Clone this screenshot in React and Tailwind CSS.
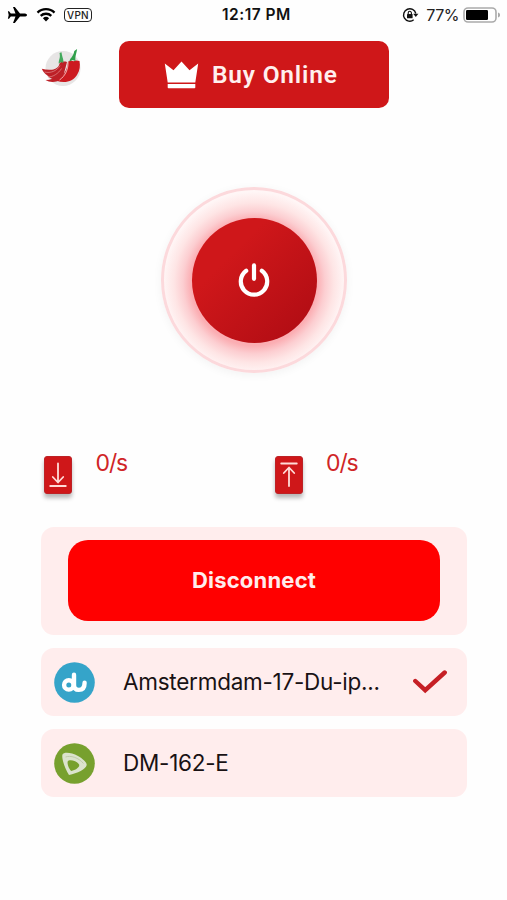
const servers = [
  { id: 1, name: 'Amstermdam-17-Du-ip...', logo: 'du', active: true },
  { id: 2, name: 'DM-162-E', logo: 'etisalat', active: false },
];

function StatusBar() {
  return (
    <div className="grid grid-cols-3 items-center h-[29px] pl-[7px] pr-[7px]">
      <div className="flex items-center">
        <svg className="w-5 h-[18px]" viewBox="0 0 20 18">
          <path
            d="M20 9c0-1-1.3-1.5-3-1.5h-4L7.800 1H6l2.500 6.500H3.800L2 5.200H.9L1.700 9 .9 12.800H2l1.800-2.300h4.700L6 17h1.800l5.200-6.500h4c1.700 0 3-.5 3-1.500z"
            fill="#000"
          />
        </svg>
        <svg className="ml-[9px] w-5 h-[15px]" viewBox="0 0 20 15">
          <path d="M1.500 5.600a12.200 12.200 0 0 1 17 0" fill="none" stroke="#000" strokeWidth="2.300" />
          <path d="M4.700 8.900a7.600 7.600 0 0 1 10.600 0" fill="none" stroke="#000" strokeWidth="2.300" />
          <path d="M10 14.400l-3.100-3.200a4.500 4.500 0 0 1 6.200 0z" fill="#000" />
        </svg>
        <span className="ml-[8px] flex items-center justify-center w-[28px] h-[14px] rounded-[4px] border-[1.5px] border-[#222] text-[10px] leading-none font-medium tracking-[0.3px] text-[#222]">
          VPN
        </span>
      </div>
      <div className="text-center text-[15.5px] leading-none font-semibold tracking-[0.5px] text-[#111] whitespace-nowrap pl-[6px]">
        12:17 PM
      </div>
      <div className="flex items-center justify-end">
        <svg className="w-[17px] h-[16px]" viewBox="0 0 17 16" fill="none" stroke="#111">
          <path d="M13.800 6.500A6.200 6.200 0 1 0 11.700 12.800" strokeWidth="1.400" />
          <path d="M11.200 6.700h5.200l-2.600 3.200z" fill="#111" stroke="none" />
          <rect x="5" y="7" width="5.600" height="4.300" rx=".6" fill="#111" stroke="none" />
          <path d="M6.200 7V5.900a1.600 1.600 0 0 1 3.200 0V7" strokeWidth="1.100" />
        </svg>
        <span className="ml-[7px] text-[16px] leading-none tracking-[-0.5px] text-[#222]">77%</span>
        <svg className="ml-[4px] w-[37px] h-4" viewBox="0 0 37 16">
          <rect x="1" y="1" width="32" height="14" rx="4" fill="#fff" stroke="#aaa" strokeWidth="1.600" />
          <rect x="3" y="3" width="22" height="10" rx="1.200" fill="#000" />
          <path d="M35 5.500c1.700.6 2 1.500 2 2.500s-.3 1.900-2 2.500z" fill="#aaa" />
        </svg>
      </div>
    </div>
  );
}

function ChiliLogo() {
  return (
    <svg className="w-[42px] h-[40px]" viewBox="0 0 42 40">
      <circle cx="22" cy="20.500" r="17.500" fill="#e7e5e5" />
      <path d="M26 14c-3-1-6-.5-7.500 1.500-.6 3.500-3.500 5.800-7.500 6.200C7.500 22.100 4 21.700.8 20.800c1.400 3.200 3.200 5.300 5.700 6.700 3 3.800 9 6 15 3.800z" fill="#bd2027" />
      <path d="M4.500 32c4.500 2.800 11 2.600 16.500-1l-5-2.800c-3 2.500-7 3.700-11.500 3.800z" fill="#bd2027" />
      <path d="M3.500 24c6 1.500 12.500-1 15.500-6.500M7 29c5 0 10.500-3.500 13.500-8.500" fill="none" stroke="#e8a0a0" strokeWidth=".6" />
      <path d="M27 13.700c-.8 7-3 13.500-11.500 19 8.500 3.200 16.700.6 20.500-5.700 3-4.800 3.300-9.500 2.500-14-2.600-1-4.500-.7-5.800.3-1.500-.9-3.800-.9-5.700.4z" fill="#cc1a20" />
      <path d="M27 14c.3 7-2.300 13.500-8.500 18" fill="none" stroke="#f4c2c2" strokeWidth=".9" />
      <path d="M17.700 15.500c-.2-4 2-5 .8-10.500l2-.7c.8 6 2.300 6.500 1.800 10.700l-2-1z" fill="#42a95c" />
      <path d="M28.500 13.500c.3-3.500 3.500-4 4.800-10.500l2.800-2c-.8 5.500-2.300 7.500-1.500 12l-3-1z" fill="#31a04c" />
    </svg>
  );
}

function PowerButton() {
  return (
    <button className="flex items-center justify-center size-[186px] rounded-full border-[3px] border-[#fcd9dc] bg-[radial-gradient(circle_at_50%_51.5%,#f9a3aa_0px,#fbaeb3_63px,#fcced1_71px,#fee5e5_80px,#fff6f6_91px)] shadow-[0_2px_10px_rgba(0,0,0,0.05)]">
      <span className="flex items-center justify-center size-[125px] rounded-full bg-linear-to-br from-[#cf171a] from-30% to-[#ad0b13]">
        <svg className="w-[34px] h-[36px]" viewBox="0 0 34 36" fill="none" stroke="#fff" strokeWidth="4.200" strokeLinecap="round">
          <path d="M17 3.400v13.400" />
          <path d="M9.200 8.800a13.200 13.200 0 1 0 15.600 0" />
        </svg>
      </span>
    </button>
  );
}

function Speed({ upload, value }) {
  return (
    <div className="flex items-start w-[230.5px]">
      <span className="flex items-center justify-center mt-[5px] w-[28px] h-[38px] rounded-[3px] bg-[#cf1719] border border-[#bd2226] shadow-[0_4px_4px_rgba(0,0,0,0.28)]">
        <svg
          className="w-[18px] h-[26px] shrink-0"
          viewBox="0 0 18 26"
          fill="none"
          stroke="#ffdcd8"
          strokeWidth="1.800"
          strokeLinecap="round"
          strokeLinejoin="round"
        >
          {upload ? (
            <path d="M1.200 1.500h15.600M9 24V6M3.800 11L9 5.500l5.200 5.500" />
          ) : (
            <path d="M1.200 24h15.600M9 1.500v18.500M3.800 15L9 20.500l5.200-5.500" />
          )}
        </svg>
      </span>
      <span className="ml-[23.5px] text-[23px] leading-[25px] tracking-[-1.1px] text-[#d02527]">{value}</span>
    </div>
  );
}

function DuLogo() {
  return (
    <svg className="size-[41px]" viewBox="0 0 41 41">
      <circle cx="20.500" cy="20.500" r="20.300" fill="#35a4c9" />
      <g fill="none" stroke="#fff" strokeWidth="4.400" strokeLinecap="round" strokeLinejoin="round">
        <circle cx="14.800" cy="22.900" r="4.700" />
        <path d="M20 12.700v10.300c0 3.200 1.700 4.900 4.800 4.900 3.800 0 5.800-2.600 5.800-7.200" />
      </g>
    </svg>
  );
}

function EtisalatLogo() {
  return (
    <svg className="size-[41px]" viewBox="0 0 41 41">
      <circle cx="20.500" cy="20.500" r="20.300" fill="#77a02e" />
      <path
        d="M8.500 11.500c1-2.500 8.500-2.500 15.500 1.500 5.500 3.200 9 6.700 8.700 9-.5 4-9.500 8.500-17.700 10C11.500 27 7.200 15.500 8.500 11.500z"
        fill="#dbe3cd"
      />
      <path d="M11.500 14c5-1.800 13 .5 18 6.500" fill="none" stroke="#b7c5a0" strokeWidth=".8" />
      <path d="M13.800 18.300c1.500-2.500 9.500-.3 11.300 3.200 1 2.500-3.500 5.500-7.700 6.500-2.200-1.700-4.600-7.200-3.600-9.700z" fill="#77a02e" />
    </svg>
  );
}

function ServerRow({ server }) {
  return (
    <div className="flex items-center h-[68px] pl-[13px] pr-5 rounded-[13px] bg-[#ffeded]">
      {server.logo === 'du' ? <DuLogo /> : <EtisalatLogo />}
      <span className="ml-[28px] flex-1 text-[22.5px] leading-none tracking-[-0.25px] text-[#191214] whitespace-nowrap">
        {server.name}
      </span>
      {server.active && (
        <svg className="w-[34px] h-[24px]" viewBox="0 0 34 24">
          <path d="M2.300 11l9.900 9.200L31.700 2.500" fill="none" stroke="#c61f25" strokeWidth="4.400" strokeLinecap="round" />
        </svg>
      )}
    </div>
  );
}

export default function App() {
  return (
    <div className="w-[507px] h-[900px] overflow-hidden bg-[#fefefe] font-['Inter','Liberation_Sans',sans-serif]">
      <StatusBar />

      {/* Header */}
      <div className="flex items-start pl-[41px] pt-[12px]">
        <div className="mt-[7px]">
          <ChiliLogo />
        </div>
        <button className="ml-[36px] flex items-center w-[270px] h-[67px] pl-[45px] rounded-[10px] bg-[#cf1719] text-white">
          <svg className="w-[35px] h-[28px]" viewBox="0 0 35 28" fill="#fff">
            <path d="M.8 2.500l8.700 6.800L17.500.5l8 8.800 8.700-6.800-2.900 18.900H3.700z" />
            <path d="M3.700 22.900h27.600v3.600q0 .8-.8.8h-26q-.8 0-.8-.8z" />
          </svg>
          <span className="ml-[13px] pt-[2px] font-['Roboto'] text-[24.5px] leading-none font-semibold tracking-[0.8px] text-[#fff0ee] whitespace-nowrap">
            Buy Online
          </span>
        </button>
      </div>

      {/* Power */}
      <div className="flex justify-center mt-[79px] pl-[1px]">
        <PowerButton />
      </div>

      {/* Speeds */}
      <div className="flex mt-[78px] h-[76px] pl-[44px]">
        <Speed value="0/s" />
        <Speed value="0/s" upload />
      </div>

      {/* Connection and servers */}
      <div className="flex flex-col gap-[13px] pl-[41px] w-[467px]">
        <div className="h-[108px] px-[27px] pt-[13px] rounded-[13px] bg-[#ffeded]">
          <button className="w-full h-[81px] rounded-[20px] bg-[#ff0000] text-[22px] font-bold tracking-[0.2px] text-[#ffecec]">
            Disconnect
          </button>
        </div>
        {servers.map((server) => (
          <ServerRow key={server.id} server={server} />
        ))}
      </div>
    </div>
  );
}
